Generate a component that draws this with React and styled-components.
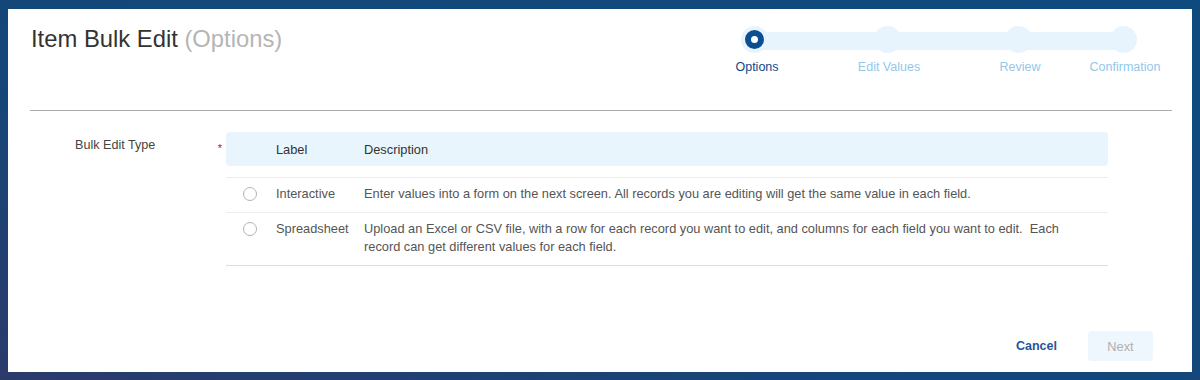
import React from 'react';
import styled, { createGlobalStyle } from 'styled-components';

const GlobalStyle = createGlobalStyle`
  html, body {
    margin: 0;
    padding: 0;
  }
  body {
    min-height: 380px;
    background: linear-gradient(20deg, #2b3a6b 0%, #154677 35%, #0e4a7e 100%);
    font-family: "Liberation Sans", Arial, sans-serif;
  }
`

const Panel = styled.div`
  box-sizing: border-box;
  margin: 9px 8px 0 8px;
  height: 363px;
  background: #fff;
  padding: 0 20px 0 22px;
  display: flex;
  flex-direction: column;
`

const Header = styled.div`
  box-sizing: border-box;
  height: 102px;
  padding-top: 16px;
  border-bottom: 1px solid #ababab;
  display: flex;
  justify-content: space-between;
  align-items: flex-start;
`

const Title = styled.h1`
  margin: 0 0 0 1px;
  font-size: 23.8px;
  line-height: 28px;
  font-weight: normal;
  color: #333;
`

const Sub = styled.span`
  color: #b5b5b5;
`

const Stepper = styled.div`
  position: relative;
  display: flex;
  margin: 1px 11px 0 0;

  &::before {
    content: '';
    position: absolute;
    left: 67px;
    right: 36px;
    top: 6px;
    height: 18px;
    background: #e8f4fd;
  }
`

const Step = styled.div`
  position: relative;
  width: ${p => p.w}px;
  display: flex;
  flex-direction: column;
  align-items: center;
`

const Dot = styled.div`
  width: 27px;
  height: 27px;
  border-radius: 50%;
  background: #e8f4fd;
  display: flex;
  align-items: center;
  justify-content: center;
  margin-left: ${p => (p.active ? -6 : -4)}px;
`

const Ring = styled.div`
  box-sizing: border-box;
  width: 19px;
  height: 19px;
  border-radius: 50%;
  border: 6px solid #0d4e93;
  background: #fff;
`

const StepLabel = styled.div`
  margin-top: 7px;
  font-size: 12.5px;
  line-height: 15px;
  white-space: nowrap;
  color: ${p => (p.active ? '#10498a' : '#93c8ea')};
`

const Content = styled.div`
  padding: 21px 64px 0 0;
  display: grid;
  grid-template-columns: 196px 1fr;
`

const FieldLabel = styled.div`
  display: flex;
  justify-content: space-between;
  padding-left: 45px;
  font-size: 12.6px;
  line-height: 15px;
  color: #444;
`

const LabelText = styled.span`
  padding-top: 6px;
`

const Required = styled.span`
  padding-top: 9px;
  margin-right: 4px;
  color: #d0021b;
  font-size: 11px;
`

const Table = styled.div`
  font-size: 12.8px;
  color: #555;
`

const HeadRow = styled.div`
  display: grid;
  grid-template-columns: 50px 88px 1fr;
  align-items: center;
  height: 34px;
  background: #e9f5fd;
  border-radius: 4px;
  margin-bottom: 11px;
  color: #333;
`

const Row = styled.div`
  display: grid;
  grid-template-columns: 50px 88px 1fr;
  align-items: start;
  border-top: 1px solid #ededed;
  padding: 7px 0 9px;
  line-height: 18px;

  &:last-child {
    border-bottom: 1px solid #dcdcdc;
  }
`

const RadioCell = styled.div`
  display: flex;
  padding-left: 17px;
  padding-top: 2px;
`

const Radio = styled.span`
  box-sizing: border-box;
  width: 14px;
  height: 14px;
  border-radius: 50%;
  border: 1px solid #b3b3b3;
  background: #fff;
`

const Desc = styled.div`
  padding-right: 30px;
  white-space: pre-wrap;
`

const Footer = styled.div`
  margin-top: auto;
  padding: 0 19px 11px 0;
  display: flex;
  justify-content: flex-end;
  align-items: center;
`

const Cancel = styled.button`
  border: none;
  background: none;
  padding: 0;
  margin-right: 31px;
  font-family: inherit;
  font-size: 12.5px;
  font-weight: bold;
  color: #1f5799;
`

const Next = styled.button`
  width: 65px;
  height: 30px;
  border: none;
  border-radius: 4px;
  background: #eef6fe;
  font-family: inherit;
  font-size: 12.8px;
  color: #b0b0b0;
`

const steps = [
  { name: 'Options', w: 140 },
  { name: 'Edit Values', w: 124 },
  { name: 'Review', w: 138 },
  { name: 'Confirmation', w: 72 },
]

const rows = [
  { label: 'Interactive', desc: 'Enter values into a form on the next screen. All records you are editing will get the same value in each field.' },
  { label: 'Spreadsheet', desc: 'Upload an Excel or CSV file, with a row for each record you want to edit, and columns for each field you want to edit.  Each record can get different values for each field.' },
]

export default function App() {
  return (
    <>
      <GlobalStyle />
      <Panel>
        <Header>
          <Title>Item Bulk Edit <Sub>(Options)</Sub></Title>
          <Stepper>
            {steps.map((s, i) => (
              <Step key={s.name} w={s.w}>
                <Dot active={i === 0}>{i === 0 && <Ring />}</Dot>
                <StepLabel active={i === 0}>{s.name}</StepLabel>
              </Step>
            ))}
          </Stepper>
        </Header>

        <Content>
          <FieldLabel>
            <LabelText>Bulk Edit Type</LabelText>
            <Required>*</Required>
          </FieldLabel>
          <Table>
            <HeadRow>
              <span />
              <span>Label</span>
              <span>Description</span>
            </HeadRow>
            {rows.map(r => (
              <Row key={r.label}>
                <RadioCell><Radio /></RadioCell>
                <span>{r.label}</span>
                <Desc>{r.desc}</Desc>
              </Row>
            ))}
          </Table>
        </Content>

        <Footer>
          <Cancel>Cancel</Cancel>
          <Next>Next</Next>
        </Footer>
      </Panel>
    </>
  );
}
